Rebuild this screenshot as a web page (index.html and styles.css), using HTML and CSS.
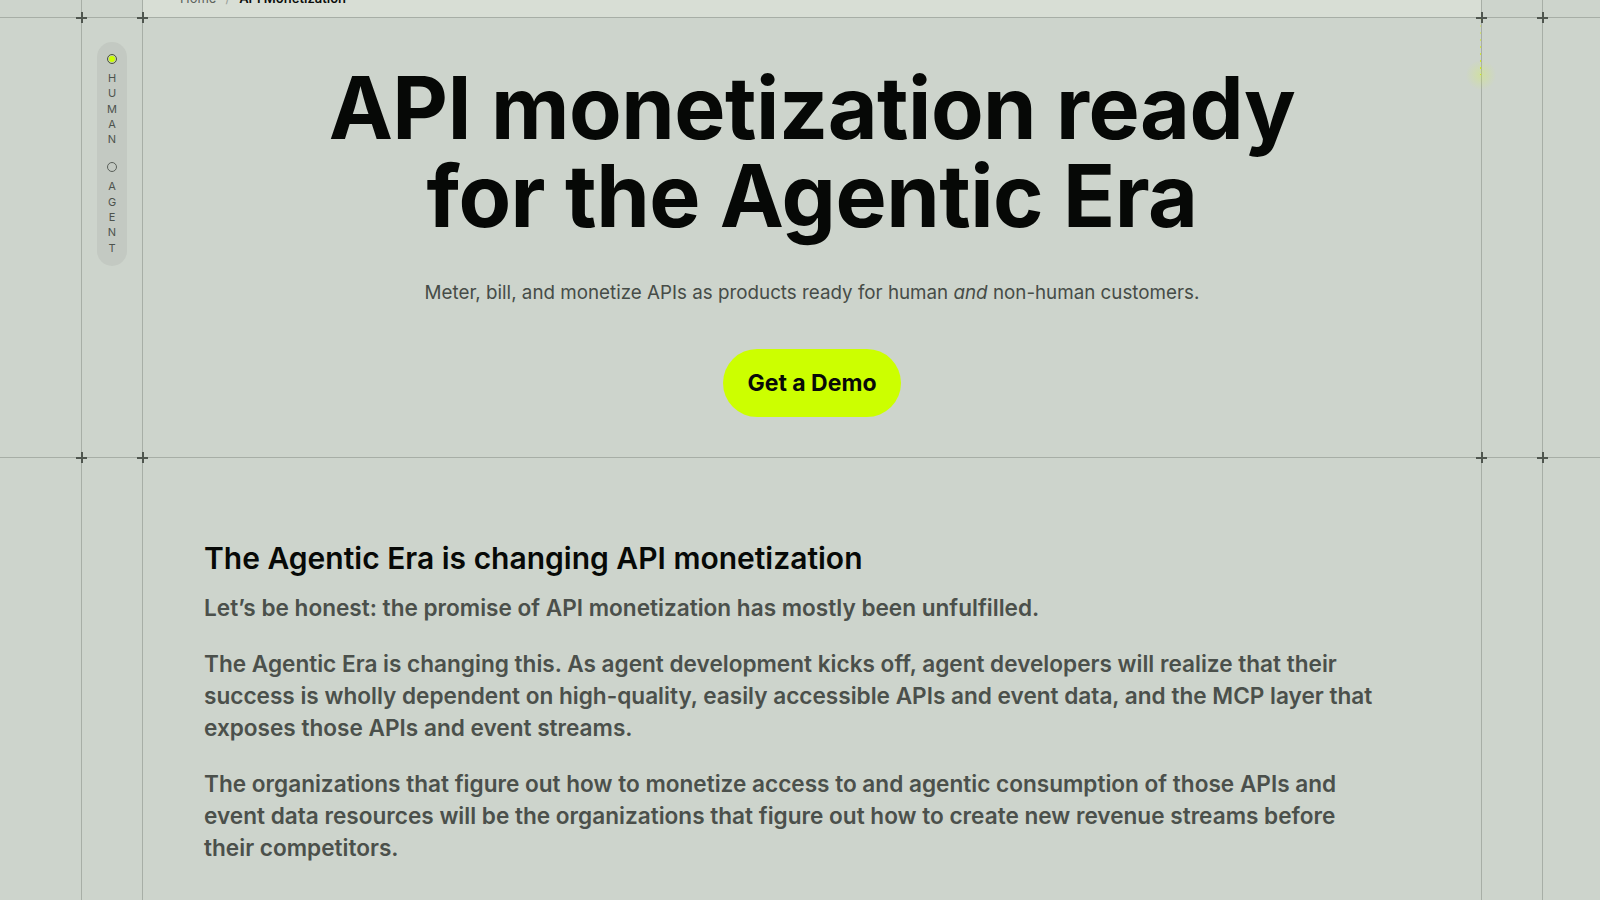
FILE: index.html
```html
<!DOCTYPE html>
<html lang="en">
<head>
<meta charset="utf-8">
<title>API Monetization</title>
<link rel="stylesheet" href="styles.css">
</head>
<body>
<div class="row row-crumb">
  <div class="frame">
    <div class="gutter"></div>
    <div class="center crumb-cell">
      <nav class="crumbs"><span class="crumb-home">Home</span><span class="crumb-sep">/</span><span class="crumb-current">API Monetization</span></nav>
    </div>
    <div class="gutter"></div>
    <span class="cross cross-a"></span><span class="cross cross-b"></span><span class="cross cross-c"></span><span class="cross cross-d"></span>
  </div>
</div>

<div class="row row-hero">
  <div class="frame">
    <div class="gutter gutter-toggle">
      <div class="mode-toggle">
        <div class="mode mode-on">
          <span class="dot dot-on"></span>
          <span class="mode-letters"><span>H</span><span>U</span><span>M</span><span>A</span><span>N</span></span>
        </div>
        <div class="mode">
          <span class="dot"></span>
          <span class="mode-letters"><span>A</span><span>G</span><span>E</span><span>N</span><span>T</span></span>
        </div>
      </div>
    </div>
    <div class="center hero">
      <h1 class="hero-title">API monetization ready<br>for the Agentic Era</h1>
      <p class="hero-sub">Meter, bill, and monetize APIs as products ready for human <em>and</em> non-human customers.</p>
      <a class="btn-demo" href="#">Get a Demo</a>
    </div>
    <div class="gutter"></div>
    <span class="beam"></span><span class="glow"></span>
    <span class="cross cross-a"></span><span class="cross cross-b"></span><span class="cross cross-c"></span><span class="cross cross-d"></span>
  </div>
</div>

<div class="row row-body">
  <div class="frame">
    <div class="gutter"></div>
    <div class="center article">
      <h2 class="article-title">The Agentic Era is changing API monetization</h2>
      <p class="article-p">Let’s be honest: the promise of API monetization has mostly been unfulfilled.</p>
      <p class="article-p">The Agentic Era is changing this. As agent development kicks off, agent developers will realize that their success is wholly dependent on high-quality, easily accessible APIs and event data, and the MCP layer that exposes those APIs and event streams.</p>
      <p class="article-p">The organizations that figure out how to monetize access to and agentic consumption of those APIs and event data resources will be the organizations that figure out how to create new revenue streams before their competitors.</p>
    </div>
    <div class="gutter"></div>
  </div>
</div>
</body>
</html>
```

FILE: styles.css
```css
* { box-sizing: border-box; }
html, body { margin: 0; padding: 0; }
body {
  background: #cdd4cc;
  font-family: Inter, "Noto Sans", sans-serif;
  color: #0a0c0a;
  overflow: hidden;
  height: 900px;
}

.row {
  border-bottom: 1px solid #a7aea6;
}
.row-body { border-bottom: none; height: 442px; }
.row-body .frame { height: 100%; }

.frame {
  position: relative;
  margin-left: 81px;
  width: 1462px;
  display: grid;
  grid-template-columns: 60px 1340px 60px;
  border-left: 1px solid #a7aea6;
  border-right: 1px solid #a7aea6;
}
.center {
  border-left: 1px solid #a7aea6;
  border-right: 1px solid #a7aea6;
}

/* breadcrumb */
.row-crumb .frame { height: 17px; }
.crumb-cell {
  background: #d8ded5;
  overflow: hidden;
}
.crumbs {
  margin-top: -12px;
  padding-left: 37px;
  font-size: 13px;
  line-height: 20px;
  display: flex;
  gap: 9px;
}
.crumb-home { color: #5d635d; }
.crumb-sep { color: #9aa19a; }
.crumb-current { color: #0a0c0a; font-weight: 600; }

/* crosshairs */
.cross {
  position: absolute;
  bottom: -6px;
  width: 11px;
  height: 11px;
  z-index: 2;
}
.cross::before, .cross::after {
  content: "";
  position: absolute;
  background: #4f564f;
}
.cross::before { left: 0; right: 0; top: 4.5px; height: 2px; }
.cross::after { top: 0; bottom: 0; left: 4.5px; width: 2px; }
.cross-a { left: -6px; }
.cross-b { left: 55px; }
.cross-c { left: 1394px; }
.cross-d { right: -6px; }

/* hero */
.gutter-toggle {
  display: flex;
  justify-content: center;
  padding-top: 24px;
}
.mode-toggle {
  width: 30px;
  height: 224px;
  border-radius: 15px;
  background: #c3c9c2;
  padding: 12px 0 11px;
  display: flex;
  flex-direction: column;
  align-items: center;
  gap: 15px;
}
.mode {
  display: flex;
  flex-direction: column;
  align-items: center;
  gap: 7px;
}
.dot {
  width: 10px;
  height: 10px;
  border-radius: 50%;
  border: 1px solid #5a605a;
}
.dot-on {
  background: #ccff00;
  box-shadow: inset 0 0 0 1px #c3c9c2;
  border-color: #4a504a;
}
.mode-letters {
  display: flex;
  flex-direction: column;
  align-items: center;
  font-size: 11px;
  line-height: 15.3px;
  color: #4d534d;
}

.hero {
  display: flex;
  flex-direction: column;
  align-items: center;
  padding: 46px 0 40px;
  text-align: center;
}
.hero-title {
  margin: 0;
  font-size: 86px;
  line-height: 88px;
  font-weight: 700;
  letter-spacing: -0.5px;
  color: #060806;
}
.hero-sub {
  margin: 39px 0 0;
  font-size: 18.8px;
  line-height: 28px;
  color: #464c47;
}
.hero-sub em { font-style: italic; }
.btn-demo {
  margin-top: 42px;
  display: inline-flex;
  align-items: center;
  justify-content: center;
  width: 178px;
  height: 68px;
  border-radius: 34px;
  background: #ccff00;
  color: #080a08;
  font-size: 23px;
  font-weight: 700;
  text-decoration: none;
}

.beam {
  position: absolute;
  left: 1398px;
  top: 0;
  width: 1px;
  height: 57px;
  background: repeating-linear-gradient(to bottom, #d4f000 0 2px, transparent 2px 7px);
  -webkit-mask-image: linear-gradient(to bottom, rgba(0,0,0,0.2), #000);
  mask-image: linear-gradient(to bottom, rgba(0,0,0,0.2), #000);
}
.glow {
  position: absolute;
  left: 1384px;
  top: 42px;
  width: 30px;
  height: 30px;
  border-radius: 50%;
  background: radial-gradient(circle, rgba(215,250,60,0.28) 0%, rgba(215,250,60,0.1) 45%, rgba(215,250,60,0) 72%);
}

/* article */
.article {
  padding: 80px 61px 0;
}
.article-title {
  margin: 0;
  font-size: 30px;
  line-height: 40px;
  font-weight: 600;
  color: #070907;
}
.article-p {
  margin: 14px 0 0;
  max-width: 1175px;
  font-size: 22.6px;
  line-height: 32px;
  font-weight: 600;
  color: #4b504b;
}
.article-p + .article-p { margin-top: 24px; }
```
